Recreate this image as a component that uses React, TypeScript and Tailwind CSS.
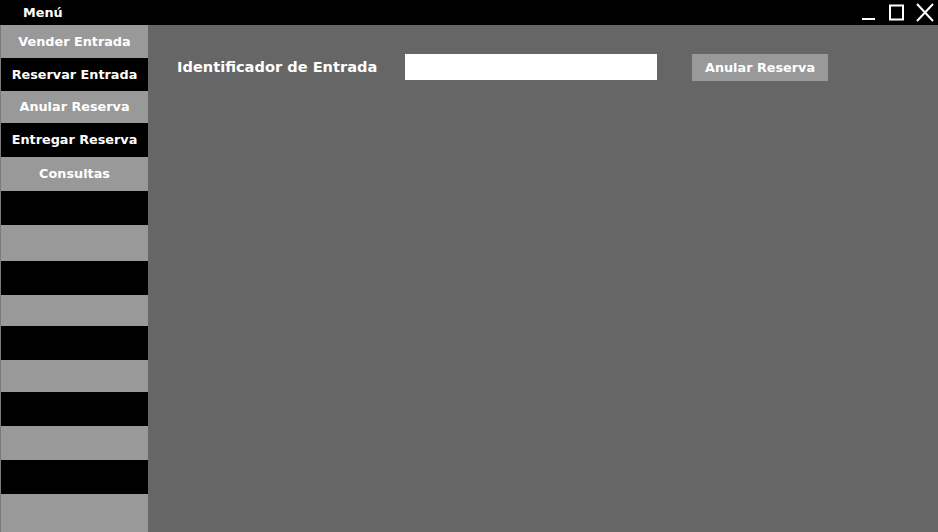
import React from "react";

// menu rows: label (or empty) + height in px, alternating gray/black
const ROWS: { label: string; h: number }[] = [
  { label: "Vender Entrada", h: 33 },
  { label: "Reservar Entrada", h: 33 },
  { label: "Anular Reserva", h: 32 },
  { label: "Entregar Reserva", h: 34 },
  { label: "Consultas", h: 34 },
  { label: "", h: 34 },
  { label: "", h: 36 },
  { label: "", h: 34 },
  { label: "", h: 31 },
  { label: "", h: 34 },
  { label: "", h: 32 },
  { label: "", h: 34 },
  { label: "", h: 34 },
  { label: "", h: 34 },
  { label: "", h: 38 },
];

function WindowControls() {
  return (
    <div className="flex items-center h-full">
      <svg width="14" height="25" viewBox="0 0 14 25">
        <rect x="0" y="18" width="13" height="2" fill="white" />
      </svg>
      <svg width="16" height="25" viewBox="0 0 16 25" className="ml-[13px]">
        <rect x="1" y="5.5" width="13" height="14" fill="none" stroke="white" strokeWidth="2" />
      </svg>
      <svg width="18" height="25" viewBox="0 0 18 25" className="ml-[11px] mr-[4px]">
        <path d="M1 4 L17 21 M17 4 L1 21" stroke="white" strokeWidth="2" fill="none" />
      </svg>
    </div>
  );
}

export default function App() {
  return (
    <div
      className="w-[938px] h-[532px] flex flex-col overflow-hidden bg-[#666666]"
      style={{ fontFamily: '"DejaVu Sans", Verdana, sans-serif' }}
    >
      <div className="h-[25px] bg-black flex items-center justify-between shrink-0">
        <span className="pl-[23px] text-white text-[12.8px] font-bold">Menú</span>
        <WindowControls />
      </div>
      <div className="flex flex-1 min-h-0">
        <div className="w-[148px] shrink-0 border-l border-[#7a7a7a] flex flex-col">
          {ROWS.map((r, i) => (
            <div
              key={i}
              style={{ height: r.h }}
              className={`shrink-0 flex items-center justify-center text-[12.8px] font-bold text-white ${
                i % 2 === 0 ? "bg-[#999999]" : "bg-black"
              }`}
            >
              {r.label}
            </div>
          ))}
        </div>
        <div className="flex-1 flex items-start pt-[29px]">
          <label className="ml-[29px] w-[228px] shrink-0 h-[26px] flex items-center text-white text-[14.6px] font-bold">
            Identificador de Entrada
          </label>
          <input
            type="text"
            className="w-[252px] h-[26px] bg-white outline-none border-0 px-1"
          />
          <button className="ml-[35px] w-[136px] h-[27px] bg-[#999999] text-white text-[12.8px] font-bold">
            Anular Reserva
          </button>
        </div>
      </div>
    </div>
  );
}
